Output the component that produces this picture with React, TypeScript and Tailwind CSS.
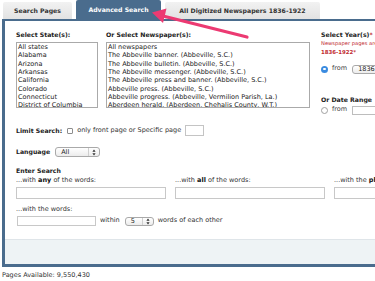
import React from 'react';

const STATES = ['All states', 'Alabama', 'Arizona', 'Arkansas', 'California', 'Colorado', 'Connecticut', 'District of Columbia'];
const PAPERS = [
  'All newspapers',
  'The Abbeville banner. (Abbeville, S.C.)',
  'The Abbeville bulletin. (Abbeville, S.C.)',
  'The Abbeville messenger. (Abbeville, S.C.)',
  'The Abbeville press and banner. (Abbeville, S.C.)',
  'Abbeville press. (Abbeville, S.C.)',
  'Abbeville progress. (Abbeville, Vermilion Parish, La.)',
  'Aberdeen herald. (Aberdeen, Chehalis County, W.T.)',
];

function SelectArrows() {
  return (
    <svg width="4" height="7" viewBox="0 0 4 7" className="shrink-0">
      <path d="M2 0.5 L3.6 2.8 L0.4 2.8 Z" fill="#333" />
      <path d="M2 6.5 L3.6 4.2 L0.4 4.2 Z" fill="#333" />
    </svg>
  );
}

function MiniSelect({ value, className }: { value: string; className: string }) {
  return (
    <div
      className={`flex items-center justify-between rounded-[3px] border border-[#a9a9a9] bg-gradient-to-b from-white to-[#ececec] pl-[5px] pr-[3px] ${className}`}
    >
      <span className="leading-none">{value}</span>
      <div className="flex h-full items-center border-l border-[#cfcfcf] pl-[3px]">
        <SelectArrows />
      </div>
    </div>
  );
}

function ListBox({ items, className }: { items: string[]; className: string }) {
  return (
    <div className={`h-[66px] overflow-hidden border border-[#aaaaaa] bg-white pl-[1px] ${className}`}>
      {items.map((item) => (
        <div key={item} className="whitespace-nowrap leading-[8.33px] text-[#222]">
          {item}
        </div>
      ))}
    </div>
  );
}

export default function App() {
  return (
    <div
      className="relative h-[281px] w-[375px] overflow-hidden bg-white text-[6.5px] text-[#222]"
      style={{ fontFamily: '"DejaVu Sans", Verdana, sans-serif' }}
    >
      {/* Tabs */}
      <div className="flex h-[19px] items-end gap-[4px] pl-[3px] text-[6.2px]">
        <div className="flex h-[17px] w-[69px] items-center justify-center rounded-t-[2px] bg-gradient-to-b from-[#f2f2f2] to-[#e2e2e2] font-bold text-[#333]">
          Search Pages
        </div>
        <div className="flex h-[19px] w-[85px] items-center justify-center rounded-t-[2px] bg-[#4a6c8d] font-bold text-white">
          Advanced Search
        </div>
        <div className="flex h-[17px] w-[155px] items-center justify-center rounded-t-[2px] bg-gradient-to-b from-[#f2f2f2] to-[#e2e2e2] font-bold text-[#333]">
          All Digitized Newspapers 1836-1922
        </div>
      </div>

      {/* Panel */}
      <div className="ml-[2px] w-[560px] border-b-[3px] border-l-[3px] border-t-[2px] border-[#4a6c8d]">
        <div className="pl-[11px] pt-[10px]">
          {/* Row 1 */}
          <div className="flex h-[84px] items-start">
            <div className="w-[82px]">
              <div className="text-[6.2px] font-bold leading-[8px]">Select State(s):</div>
              <ListBox items={STATES} className="mt-[3px] w-[82px]" />
            </div>
            <div className="ml-[8px] w-[204px]">
              <div className="text-[6.2px] font-bold leading-[8px]">Or Select Newspaper(s):</div>
              <ListBox items={PAPERS} className="mt-[3px] w-[204px]" />
            </div>
            <div className="ml-[11px] w-[160px]">
              <div className="text-[6.2px] font-bold leading-[8px]">
                Select Year(s)<span className="text-[#c0282d]">*</span>
              </div>
              <div className="mt-[1px] whitespace-nowrap text-[5.2px] leading-[7px] text-[#c0282d]">
                Newspaper pages are available for
              </div>
              <div className="mt-[1px] text-[5.4px] font-bold leading-[8px] text-[#c0282d]">1836-1922*</div>
              <div className="mt-[8px] flex h-[10px] items-center">
                <div className="flex h-[7px] w-[7px] items-center justify-center rounded-full bg-[#3a8be0]">
                  <div className="h-[2.5px] w-[2.5px] rounded-full bg-white" />
                </div>
                <span className="ml-[4px] text-[#444]">from</span>
                <MiniSelect value="1836" className="ml-[5px] h-[9px] w-[44px]" />
              </div>
              <div className="mt-[22px] text-[6.2px] font-bold leading-[8px]">Or Date Range</div>
              <div className="mt-[1px] flex h-[10px] items-center">
                <div className="h-[7px] w-[7px] rounded-full border border-[#a0a0a0] bg-white" />
                <span className="ml-[4px] text-[#444]">from</span>
                <div className="ml-[5px] h-[9px] w-[44px] border border-[#bdbdbd] bg-white" />
              </div>
            </div>
          </div>

          {/* Limit search */}
          <div className="mt-[10px] flex h-[11px] items-center">
            <span className="text-[6.2px] font-bold">Limit Search:</span>
            <div className="ml-[5px] h-[6px] w-[6px] rounded-[1px] border border-[#8d8d8d] bg-white" />
            <span className="ml-[4px] text-[#333]">only front page or Specific page</span>
            <div className="ml-[4px] h-[11px] w-[19px] border border-[#c4c4c4] bg-white" />
          </div>

          {/* Language */}
          <div className="mt-[10px] flex h-[12px] items-center">
            <span className="text-[6.2px] font-bold">Language</span>
            <MiniSelect value="All" className="ml-[5px] h-[10px] w-[45px]" />
          </div>

          {/* Enter search */}
          <div className="mt-[9px] text-[6.2px] font-bold leading-[8px]">Enter Search</div>
          <div className="mt-[1px] flex gap-[9px]">
            {[
              { pre: '...with ', b: 'any', post: ' of the words:' },
              { pre: '...with ', b: 'all', post: ' of the words:' },
              { pre: '...with the ', b: 'phrase', post: ':' },
            ].map((c) => (
              <div key={c.b} className="w-[150px]">
                <div className="whitespace-nowrap leading-[8px] text-[#333]">
                  {c.pre}
                  <b className="text-[#111]">{c.b}</b>
                  {c.post}
                </div>
                <div className="mt-[3px] h-[12px] w-[150px] border border-[#c8c8c8] bg-white" />
              </div>
            ))}
          </div>

          <div className="mt-[6px] leading-[8px] text-[#333]">...with the words:</div>
          <div className="mt-[3px] flex h-[10px] items-center">
            <div className="ml-[1px] h-[10px] w-[79px] border border-[#c8c8c8] bg-white" />
            <span className="ml-[4px] text-[#333]">within</span>
            <MiniSelect value="5" className="ml-[5px] mt-[1px] h-[9px] w-[29px]" />
            <span className="ml-[4px] text-[#333]">words of each other</span>
          </div>
        </div>

        {/* Bottom band */}
        <div className="mt-[13px] h-[25px] border-t border-[#dfe5e9] bg-[#eef3f5]" />
      </div>

      <div className="mt-[4px] pl-[2px] leading-[8px] text-[#333]">Pages Available: 9,550,430</div>

      {/* Pink annotation arrow */}
      <svg className="pointer-events-none absolute left-0 top-0" width="375" height="281" viewBox="0 0 375 281">
        <path d="M247 37 L163 16" stroke="#ec3a72" strokeWidth="3.2" strokeLinecap="round" />
        <path d="M152 12.5 L166.5 8.5 L163 23 Z" fill="#ec3a72" />
      </svg>
    </div>
  );
}
